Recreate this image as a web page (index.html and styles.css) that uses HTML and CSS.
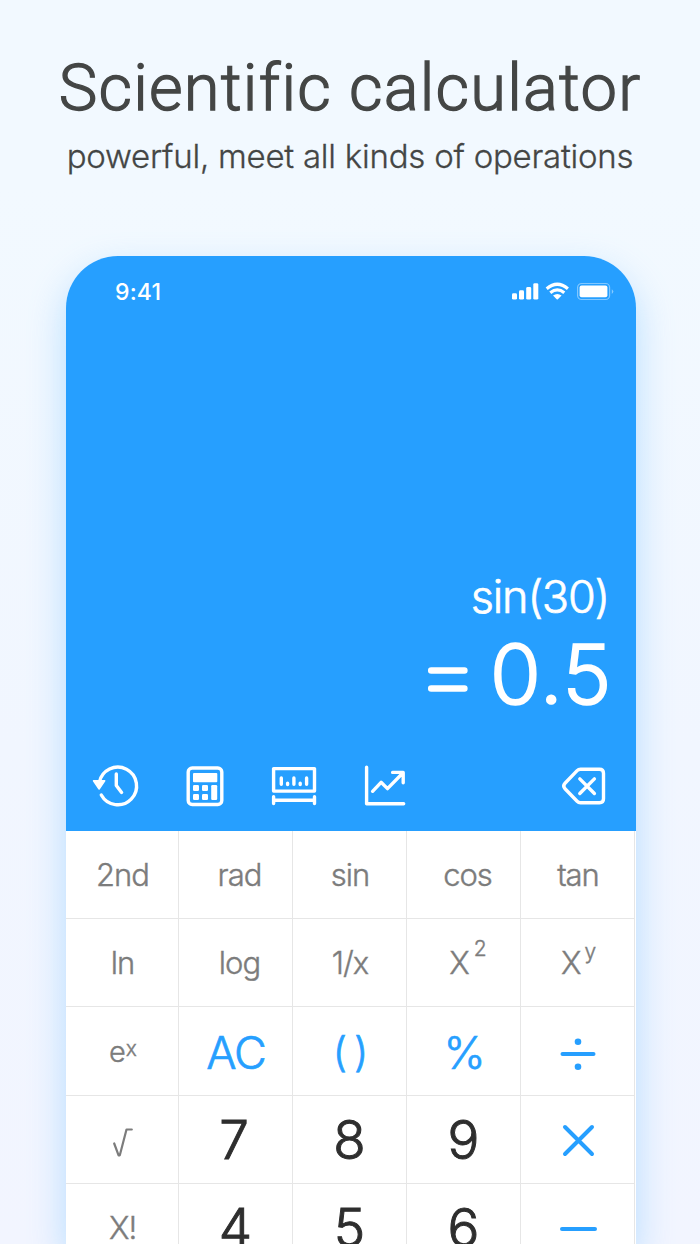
FILE: index.html
```html
<!DOCTYPE html>
<html lang="en">
<head>
<meta charset="utf-8">
<title>Scientific calculator</title>
<link rel="stylesheet" href="styles.css">
</head>
<body>
<main class="page">
  <header class="intro">
    <h1 class="title">Scientific calculator</h1>
    <p class="subtitle">powerful, meet all kinds of operations</p>
  </header>
  <section class="phone">
    <div class="display">
      <div class="status">
        <span class="time">9:41</span>
        <svg class="status-icons" width="104" height="20" viewBox="0 0 104 20">
          <g fill="#fff">
            <rect x="2" y="11.3" width="5" height="6.3" rx="1.4"/>
            <rect x="9" y="8.3" width="5" height="9.3" rx="1.4"/>
            <rect x="16.2" y="5" width="5" height="12.6" rx="1.4"/>
            <rect x="23.3" y="1.2" width="5" height="16.4" rx="1.4"/>
            <path d="M43.000 13.600Q47.300 10.600 51.600 13.600L47.900 17.300Q47.300 17.800 46.700 17.300Z"/>
          </g>
          <g fill="none" stroke="#fff" stroke-width="3.200">
            <path d="M36.700 6.700Q47.300-2.200 57.900 6.700"/>
            <path d="M40.300 10.700Q47.300 5.000 54.300 10.700"/>
          </g>
          <rect x="67.600" y="1.500" width="32" height="16" rx="4" fill="none" stroke="#fff" stroke-opacity=".42" stroke-width="1.200"/>
          <rect x="69.600" y="3.600" width="27.800" height="11.600" rx="2" fill="#fff"/>
          <path d="M101.800 7.200q3 2.300 0 4.800z" fill="#fff" opacity=".45"/>
        </svg>
      </div>
      <div class="readout">
        <div class="expression">sin(30)</div>
        <div class="result"><svg class="equals" width="42" height="28" viewBox="0 0 42 28"><path d="M4.200 5.400h33.200M4.200 23.500h33.200"/></svg><span class="value">0.5</span></div>
      </div>
      <div class="toolbar">
        <svg class="tool tool-history" width="50" height="46" viewBox="0 0 50 46">
          <path d="M7.300 19.500A18.800 18.800 0 1 1 9.300 32M24.300 11v11.500l5.300 7"/>
          <path class="solid" d="M1.500 17.800h11.200L7.100 26z"/>
        </svg>
        <svg class="tool tool-basic" width="40" height="42" viewBox="0 0 40 42">
          <rect x="3.200" y="3" width="33.600" height="36.500" rx="4"/>
          <g class="fill"><rect x="8" y="8" width="24.300" height="9.300" rx="1"/>
          <rect x="8" y="20" width="6" height="6" rx="1.200"/><rect x="17" y="20" width="6" height="6" rx="1.200"/>
          <rect x="8" y="29" width="6" height="6" rx="1.200"/><rect x="17" y="29" width="6" height="6" rx="1.200"/>
          <rect x="26.200" y="20" width="6" height="15" rx="1.200"/></g>
        </svg>
        <svg class="tool tool-ruler" width="46" height="42" viewBox="0 0 46 42">
          <path d="M2.600 3.600h40.900v22.500H2.600zM2.600 31.800v6.700M43.500 31.800v6.700M2.600 35.200h40.900M10.300 12.900v6.400M16.600 18.200v1.300M22.900 12.900v6.400M29.200 18.200v1.300M35.600 12.900v6.400"/>
        </svg>
        <svg class="tool tool-graph" width="44" height="44" viewBox="0 0 44 44">
          <path d="M4.600 3.200v36.500h37.100M10.600 27.300l8.500-9 6.400 6.300L40.800 9M30.600 8.400h10.600v10.300"/>
        </svg>
        <svg class="tool tool-delete" width="48" height="42" viewBox="0 0 48 42">
          <path d="M20.500 4.200h19q4 0 4 4v25.500q0 4-4 4h-19q-2 0-3.400-1.400L5 23.700q-2.600-2.700 0-5.400L17.100 5.600Q18.500 4.200 20.500 4.200zM19.800 13.900l14.600 14.600M34.400 13.900L19.800 28.500"/>
        </svg>
      </div>
    </div>
    <div class="keypad">
      <div class="key">2nd</div><div class="key shift">rad</div><div class="key">sin</div><div class="key shift">cos</div><div class="key">tan</div>
      <div class="key">ln</div><div class="key shift">log</div><div class="key">1/x</div><div class="key shift power"><span>X<sup class="exp-two">2</sup></span></div><div class="key power"><span>X<sup class="exp-y">y</sup></span></div>
      <div class="key small"><span>e<sup class="exp-x">x</sup></span></div><div class="key action">AC</div><div class="key action paren"><span>(</span><span>)</span></div><div class="key action">%</div>
      <div class="key op op-divide"><svg width="36" height="36" viewBox="0 0 36 36"><path d="M2.500 19h31"/><circle cx="18" cy="6.800" r="3.300"/><circle cx="18" cy="31.700" r="3.300"/></svg></div>
      <div class="key root"><svg width="22" height="30" viewBox="0 0 22 30"><path d="M2.200 16.500l4.400 11.800h1.200L14.500 2.500h5.300"/></svg></div><div class="key digit seven">7</div><div class="key digit">8</div><div class="key digit">9</div>
      <div class="key op"><svg width="36" height="36" viewBox="0 0 36 36"><path d="M5 5l27 27M32 5L5 32"/></svg></div>
      <div class="key">X!</div><div class="key digit">4</div><div class="key digit">5</div><div class="key digit">6</div>
      <div class="key op"><svg width="38" height="36" viewBox="0 0 38 36"><path d="M3.000 19h33"/></svg></div>
    </div>
  </section>
</main>
</body>
</html>
```
FILE: styles.css
```css
* { box-sizing: border-box; }

body {
  margin: 0;
  font-family: Inter, "Noto Sans", sans-serif;
  overflow: hidden;
}

.page {
  height: 1244px;
  overflow: hidden;
  background: linear-gradient(180deg, #f2f9ff 0%, #f2f9ff 15%, #f1f6ff 60%, #f2f5ff 100%);
}

.intro {
  height: 256px;
  padding-top: 49px;
  color: #444645;
  text-align: center;
  white-space: nowrap;
}

.title {
  margin: 0;
  font-family: Roboto, sans-serif;
  font-size: 65px;
  line-height: 78px;
  font-weight: 300;
  letter-spacing: 1.200px;
  font-variant-ligatures: none;
  -webkit-text-stroke: 1.300px currentColor;
}

.subtitle {
  margin: 6px 0 0;
  font-size: 33px;
  line-height: 46px;
  font-weight: 300;
  letter-spacing: -.240px;
  -webkit-text-stroke: .300px currentColor;
}

.phone {
  width: 570px;
  margin-left: 66px;
  border-radius: 52px 52px 0 0;
  background: #fff;
  box-shadow: 0 16px 36px rgba(118, 194, 255, .48);
}

.display {
  height: 575px;
  padding-top: 25px;
  display: flex;
  flex-direction: column;
  border-radius: 52px 52px 0 0;
  background: #269fff;
  color: #fff;
}

.status {
  height: 22px;
  padding: 0 22px 0 49px;
  display: flex;
  justify-content: space-between;
  align-items: center;
}

.time {
  font-size: 23px;
  font-weight: 500;
  letter-spacing: .200px;
}

.readout {
  margin-top: 264px;
  padding-right: 26px;
  text-align: right;
}

.expression {
  font-size: 45px;
  line-height: 60px;
  font-weight: 300;
  letter-spacing: -1.200px;
  margin-right: 1px;
  -webkit-text-stroke: .700px currentColor;
}

.result {
  height: 92px;
  display: flex;
  justify-content: flex-end;
  align-items: center;
}

.value {
  font-size: 83px;
  line-height: 92px;
  padding-top: 2px;
  font-weight: 300;
  letter-spacing: .500px;
  margin-right: -2px;
  -webkit-text-stroke: 1.700px currentColor;
}

.equals {
  margin: 11px 21px 0 0;
  fill: none;
  stroke: #fff;
  stroke-width: 6.500;
  stroke-linecap: round;
}

.toolbar {
  margin-top: 44px;
  height: 46px;
  padding: 0 28px 0 26px;
  display: flex;
  align-items: center;
}

.tool {
  fill: none;
  stroke: #fff;
  stroke-width: 3.400;
  stroke-linecap: round;
  stroke-linejoin: round;
}

.tool .solid { fill: #fff; stroke-width: 1.500; }
.tool .fill { fill: #fff; stroke: none; }
.tool-basic { margin-left: 43px; }
.tool-ruler { margin-left: 46px; }
.tool-graph { margin-left: 45px; }
.tool-delete { margin-left: auto; }

.keypad {
  display: grid;
  grid-template-columns: 113px repeat(4, 114px);
  grid-template-rows: 88px 88px 89px 88px 88px;
  height: 413px;
  overflow: hidden;
}

.key {
  display: flex;
  align-items: center;
  justify-content: center;
  padding-left: 1px;
  border-right: 1px solid #e6e6e6;
  border-bottom: 1px solid #e6e6e6;
  color: #7c7c7c;
  font-size: 31px;
  font-weight: 300;
  letter-spacing: -1px;
  -webkit-text-stroke: .400px currentColor;
}

.shift { padding-left: 8px; }

.key sup {
  line-height: 0;
  vertical-align: baseline;
  position: relative;
}

.exp-two { font-size: 21px; top: -18px; margin-left: 5px; }
.exp-y { font-size: 21px; top: -15px; margin-left: 4px; }
.small { font-size: 29px; }
.exp-x { font-size: 21px; top: -6px; margin-left: 1px; }

.action {
  padding-top: 2px;
  color: #269fff;
  font-size: 45px;
  letter-spacing: -1px;
  -webkit-text-stroke: .700px currentColor;
}

.paren { font-size: 41px; padding-top: 1px; gap: 8px; }

.digit {
  color: #2e2e2e;
  padding-left: 0;
  padding-right: 1px;
  font-size: 53px;
  -webkit-text-stroke: 1px currentColor;
}

.seven { padding-right: 4px; }

.op svg {
  fill: #269fff;
  stroke: #269fff;
  stroke-width: 4;
  stroke-linecap: round;
}

.op circle { stroke: none; }
.op-divide { padding-top: 4px; }

.root svg {
  fill: none;
  stroke: #7c7c7c;
  stroke-width: 2.200;
  stroke-linecap: round;
  stroke-linejoin: round;
  margin-top: 5px;
}
```
